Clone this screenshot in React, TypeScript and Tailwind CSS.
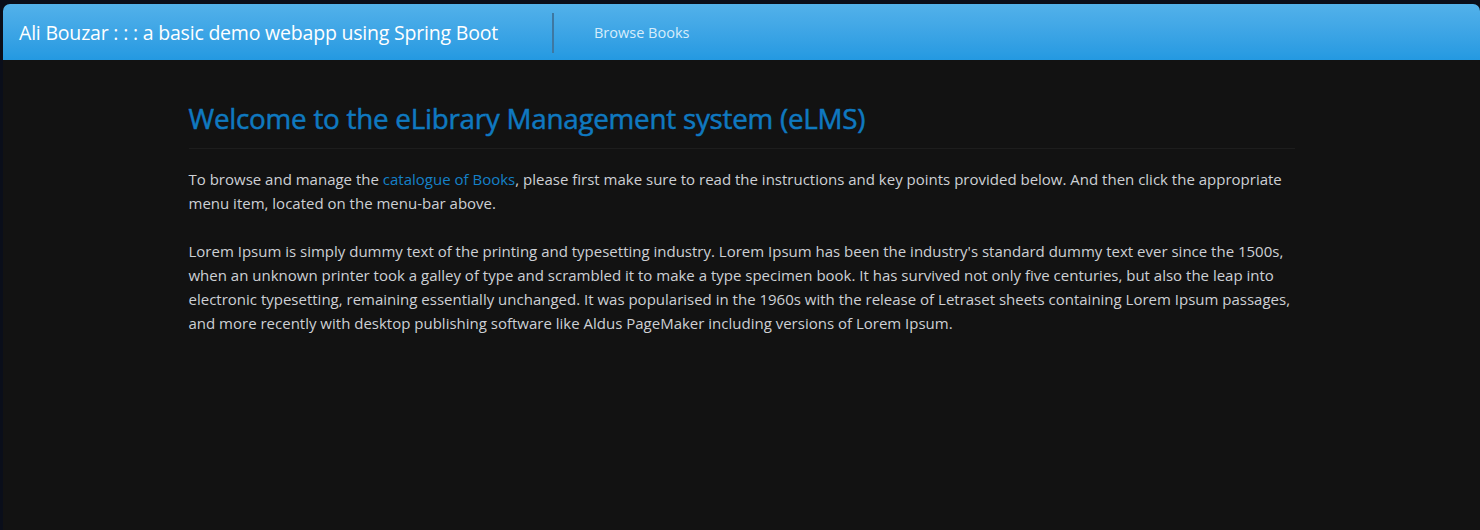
export default function App() {
  return (
    <div className="min-h-[530px] bg-[#0a0e1a] pl-[3px] pt-[4px] font-['Open_Sans',sans-serif]">
      <div className="min-h-[526px] rounded-t-[7px] bg-[#121212] overflow-hidden">
        {/* Top navbar */}
        <nav className="flex h-[56px] items-center pt-[2px] bg-gradient-to-b from-[#52b1ea] to-[#2399e1]">
          <a className="pl-[16px] text-[19.5px] text-white tracking-[-0.2px]">
            Ali Bouzar : : : a basic demo webapp using Spring Boot
          </a>
          <div className="ml-[54px] h-[40px] w-[2px] bg-[#3e78a2]"></div>
          <a className="ml-[40px] text-[14.5px] text-[#d6edfb]">Browse Books</a>
        </nav>

        {/* Page body */}
        <main className="mx-auto w-[1106px] pt-[34px]">
          <h2 className="text-[27.8px] leading-[48px] text-[#0f79c0] tracking-[-0.25px] [-webkit-text-stroke:0.5px_#0f79c0]">
            Welcome to the eLibrary Management system (eLMS)
          </h2>
          <hr className="mt-[6px] border-t border-[#1d1d1d]" />
          <div className="mt-[18px] text-[15px] leading-[24px] text-[#cdd0d5]">
            <p>
              To browse and manage the{" "}
              <a className="text-[#1581c8]">catalogue of Books</a>, please first make sure to read the
              instructions and key points provided below. And then click the appropriate menu item,
              located on the menu-bar above.
            </p>
            <p className="mt-[24px]">
              Lorem Ipsum is simply dummy text of the printing and typesetting industry. Lorem Ipsum
              has been the industry's standard dummy text ever since the 1500s, when an unknown printer
              took a galley of type and scrambled it to make a type specimen book. It has survived not
              only five centuries, but also the leap into electronic typesetting, remaining essentially
              unchanged. It was popularised in the 1960s with the release of Letraset sheets containing
              Lorem Ipsum passages, and more recently with desktop publishing software like Aldus
              PageMaker including versions of Lorem Ipsum.
            </p>
          </div>
        </main>
      </div>
    </div>
  );
}
